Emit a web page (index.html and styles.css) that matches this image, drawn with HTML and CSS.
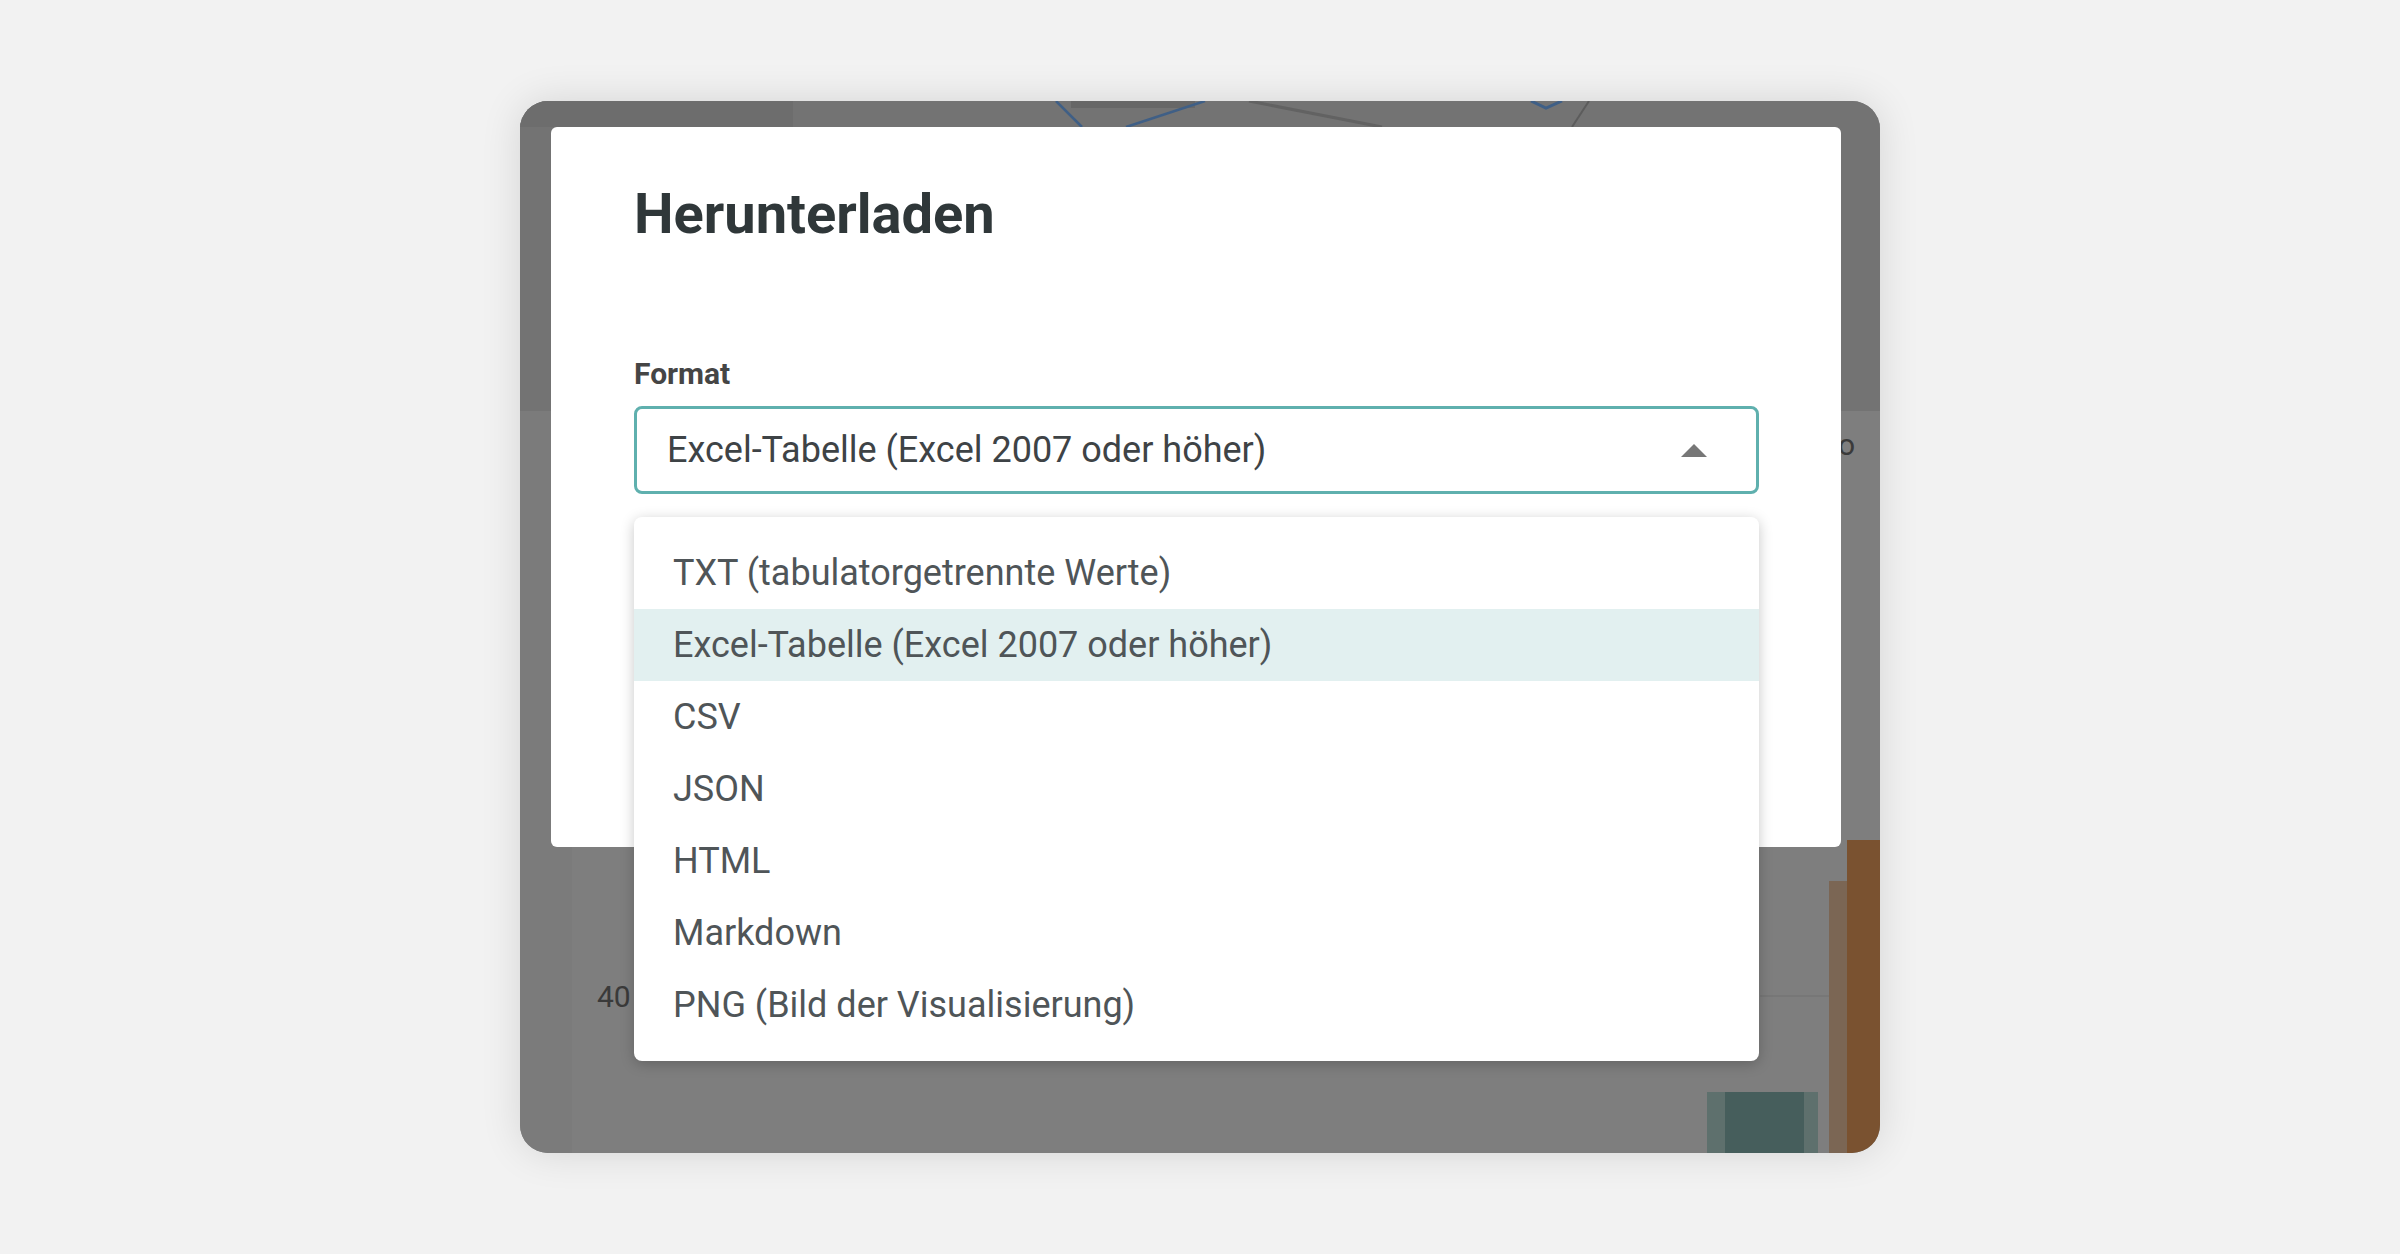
FILE: index.html
```html
<!DOCTYPE html>
<html lang="de">
<head>
  <meta charset="UTF-8" />
  <title>Herunterladen</title>
  <link rel="stylesheet" href="styles.css">
</head>
<body>
  <div class="frame">
    <!-- dimmed chart behind the dialog -->
    <svg class="backdrop" viewBox="0 0 1360 1052" preserveAspectRatio="none">
      <rect x="0" y="0" width="1360" height="310" fill="#737373" />
      <rect x="0" y="0" width="273" height="26" fill="#6d6d6d" />
      <rect x="0" y="310" width="52" height="742" fill="#7b7b7b" />
      <rect x="551" y="0" width="124" height="7" fill="#676767" />
      <line x1="536" y1="0" x2="562" y2="26" stroke="#3f5f86" stroke-width="2.5" />
      <line x1="606" y1="26" x2="685" y2="0" stroke="#3f5f86" stroke-width="2.5" />
      <line x1="729" y1="0" x2="862" y2="26" stroke="#626262" stroke-width="3" />
      <polyline points="1011,0 1026,7 1042,0" fill="none" stroke="#3f5f86" stroke-width="3" />
      <line x1="1069" y1="0" x2="1052" y2="26" stroke="#5c5c5c" stroke-width="2" />
      <line x1="1240" y1="895" x2="1360" y2="895" stroke="#777" stroke-width="2" />
      <text x="1318" y="354" class="tick">o</text>
      <text x="77" y="906" class="tick">40</text>
      <text x="80" y="1073" class="tick">20 000</text>
      <rect x="1309" y="780" width="18" height="272" fill="#7b6654" />
      <rect x="1327" y="739" width="33" height="313" fill="#7a5230" />
      <rect x="1187" y="991" width="111" height="61" fill="#5e706d" />
      <rect x="1205" y="991" width="79" height="61" fill="#465e5c" />
    </svg>

    <div class="dialog">
      <h2 class="dialog-title">Herunterladen</h2>
      <label class="field-label">Format</label>
      <div class="select-wrap">
        <div class="select">
          <span>Excel-Tabelle (Excel 2007 oder höher)</span>
          <span class="caret"></span>
        </div>
        <ul class="menu">
          <li>TXT (tabulatorgetrennte Werte)</li>
          <li class="active">Excel-Tabelle (Excel 2007 oder höher)</li>
          <li>CSV</li>
          <li>JSON</li>
          <li>HTML</li>
          <li>Markdown</li>
          <li>PNG (Bild der Visualisierung)</li>
        </ul>
      </div>
    </div>
  </div>
</body>
</html>
```

FILE: styles.css
```css
body {
  margin: 0;
  height: 100vh;
  background: #f2f2f2;
  font-family: Roboto, "Liberation Sans", Arial, sans-serif;
  display: flex;
  align-items: center;
  justify-content: center;
}

.frame {
  position: relative;
  width: 1360px;
  height: 1052px;
  overflow: hidden;
  border-radius: 28px;
  background: #7e7e7e;
  box-shadow: 0 0 40px rgba(0,0,0,0.12);
}

.backdrop {
  position: absolute;
  top: 0;
  left: 0;
  width: 100%;
  height: 100%;
}

.backdrop .tick {
  font-family: Roboto, sans-serif;
  font-size: 30px;
  fill: #3a3a3a;
}

.dialog {
  position: relative;
  box-sizing: border-box;
  width: 1290px;
  height: 720px;
  margin: 26px 0 0 31px;
  padding: 54px 82px 0 83px;
  background: white;
  border-radius: 6px;
}

.dialog-title {
  margin: 0;
  font-size: 56px;
  line-height: 66px;
  font-weight: 700;
  color: #2f3739;
}

.field-label {
  display: block;
  margin-top: 109px;
  font-size: 30px;
  line-height: 36px;
  font-weight: 700;
  color: #454545;
}

.select-wrap {
  position: relative;
  margin-top: 14px;
}

.select {
  box-sizing: border-box;
  height: 88px;
  padding: 0 49px 0 30px;
  border: 3px solid #5fb0ae;
  border-radius: 8px;
  display: flex;
  align-items: center;
  justify-content: space-between;
  font-size: 36px;
  color: #3e4346;
}

.caret {
  width: 0;
  height: 0;
  border-left: 13px solid transparent;
  border-right: 13px solid transparent;
  border-bottom: 13px solid #777;
}

.menu {
  position: absolute;
  top: calc(100% + 23px);
  left: 0;
  right: 0;
  margin: 0;
  padding: 20px 0;
  list-style: none;
  background: white;
  border-radius: 8px;
  box-shadow: 0 3px 14px rgba(0,0,0,0.22);
  z-index: 2;
}

.menu li {
  height: 72px;
  line-height: 73px;
  padding-left: 39px;
  font-size: 36px;
  color: #4f5558;
}

.menu li.active {
  background: #e2f0f0;
}
```
